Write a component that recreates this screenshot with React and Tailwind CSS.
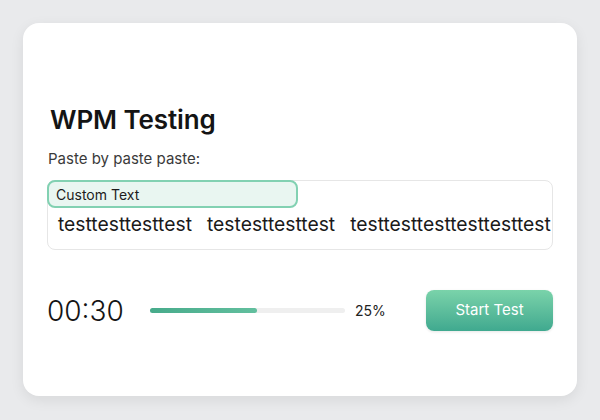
export default function App() {
  return (
    <div className="w-[600px] h-[420px] bg-[#e9eaec] pt-[23px] px-[23px] overflow-hidden" style={{ fontFamily: "Inter, 'Liberation Sans', sans-serif" }}>
      <div className="h-[373px] bg-white rounded-[16px] shadow-[0_4px_14px_rgba(0,0,0,0.08)] px-6 pt-[81px]">
        <h1 className="ml-[3px] text-[26px] leading-[32px] font-semibold text-[#141414] tracking-[-0.1px]">WPM Testing</h1>
        <p className="ml-[1px] mt-[13px] text-[15px] leading-[20px] text-[#3a3a3a]">Paste by paste paste:</p>
        <div className="mt-[11px] h-[70px] border border-[#e6e6e6] rounded-[8px]">
          <div className="-mt-px -ml-px w-[251px] h-[28px] border-2 border-[#82d1b2] bg-[#e9f6f1] rounded-[8px] pl-[7px] flex items-center text-[14px] text-[#1c1c1c]">Custom Text</div>
          <div className="mt-[3px] pl-[10px] flex gap-[15px] text-[19.3px] leading-[26px] text-[#1a1a1a] whitespace-nowrap">
            <span>testtesttesttest</span>
            <span>testesttesttest</span>
            <span>testtesttesttesttesttest</span>
          </div>
        </div>
        <div className="mt-10 flex items-center">
          <div className="w-[103px] text-[28px] leading-[34px] font-light text-[#141414]">00:30</div>
          <div className="w-[195px] h-[5px] rounded-full bg-[#efefef]">
            <div className="h-full w-[107px] rounded-full bg-gradient-to-r from-[#47ab8b] to-[#62bf9e]" />
          </div>
          <div className="ml-[10px] text-[14px] text-[#222]">25%</div>
          <button className="ml-auto w-[127px] h-[41px] rounded-[8px] bg-gradient-to-b from-[#7ad3aa] to-[#3fa98f] text-white text-[15px] shadow-[0_1px_3px_rgba(0,0,0,0.1)]">Start Test</button>
        </div>
      </div>
    </div>
  );
}
